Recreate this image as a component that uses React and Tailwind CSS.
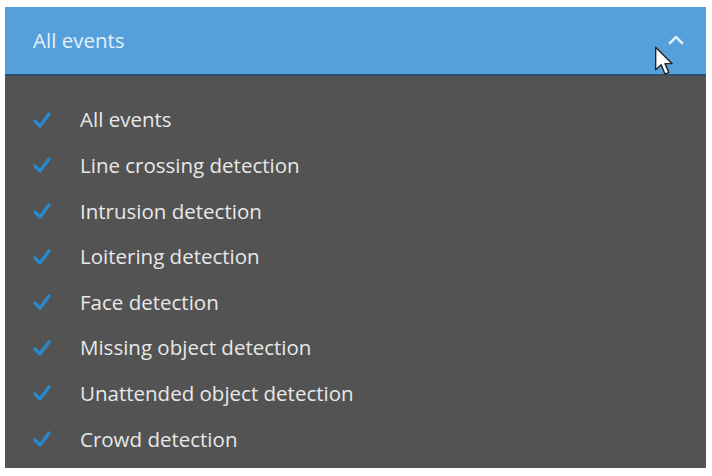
import React from 'react';

const EVENTS = [
    'All events',
    'Line crossing detection',
    'Intrusion detection',
    'Loitering detection',
    'Face detection',
    'Missing object detection',
    'Unattended object detection',
    'Crowd detection'
];

const Check = () => (
    <svg width="18" height="16" viewBox="0 0 18 16" className="shrink-0">
        <path d="M2 9 L7 14 L16 2" fill="none" stroke="#2c88cc" strokeWidth="3.4" strokeLinecap="round" strokeLinejoin="round" />
    </svg>
);

// mouse pointer sitting over the header
const Cursor = () => (
    <svg width="22" height="34" viewBox="0 0 20 30" className="absolute left-[649px] top-[38px]">
        <path d="M1.5 1.5 L1.5 22 L6.5 17.5 L10 26 L13.5 24.5 L10 16.5 L16.5 16.5 Z" fill="#fff" stroke="#222" strokeWidth="1.3" strokeLinejoin="round" />
    </svg>
);

export default function App() {
    return (
        <div className="w-[712px] h-[476px] bg-white pt-[7px] pl-[5px] pr-[6px] pb-[8px]" style={{ fontFamily: '"Open Sans", "Noto Sans", sans-serif' }}>
            <div className="relative h-full flex flex-col bg-[#535353]">
                <div className="h-[69px] shrink-0 bg-[#55a0da] flex items-center justify-between pl-[28px] pr-[22px] border-b-[2px] border-[#2f4f6a]">
                    <span className="text-[20.5px] text-[#e4f0fa]">All events</span>
                    <svg width="16" height="10" viewBox="0 0 16 10" className="mb-[2px]">
                        <path d="M2 8 L8 2 L14 8" fill="none" stroke="#d9ecfa" strokeWidth="2.6" strokeLinecap="round" strokeLinejoin="round" />
                    </svg>
                </div>
                <ul className="flex flex-col pt-[21px]">
                    {EVENTS.map(e => (
                        <li key={e} className="h-[45.6px] flex items-center pl-[28px]">
                            <Check />
                            <span className="ml-[29px] text-[20.5px] text-[#e8e8e8]">{e}</span>
                        </li>
                    ))}
                </ul>
                <Cursor />
            </div>
        </div>
    );
}
